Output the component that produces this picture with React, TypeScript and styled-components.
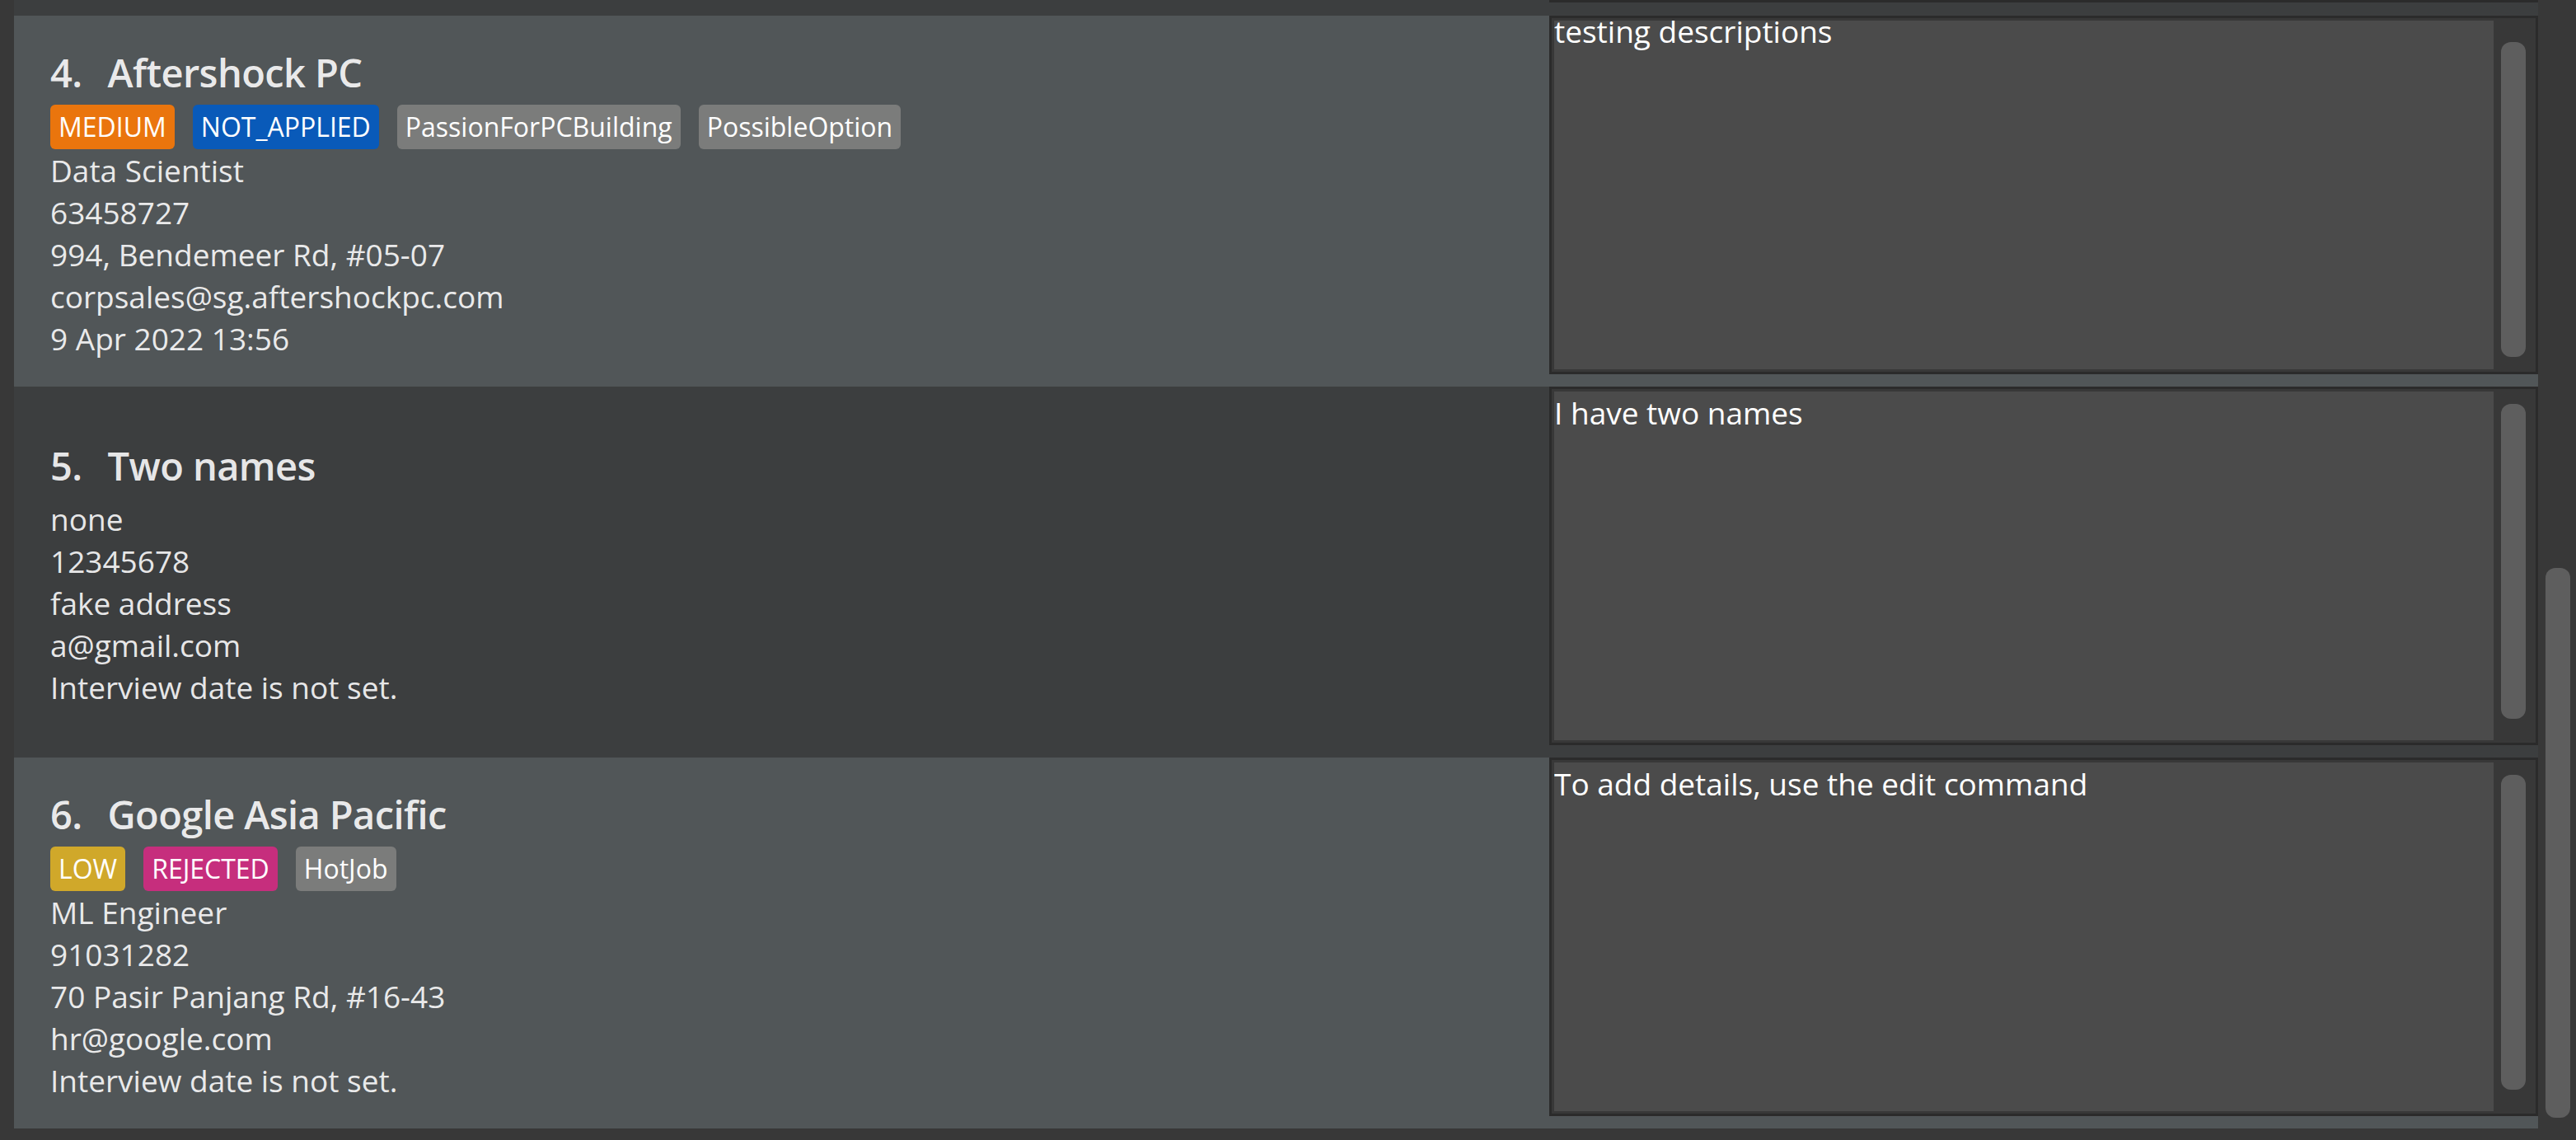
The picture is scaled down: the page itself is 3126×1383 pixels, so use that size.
import React from 'react';
import styled, { createGlobalStyle } from 'styled-components';

const GlobalStyle = createGlobalStyle`
  html, body {
    margin: 0;
    padding: 0;
    background: #383838;
  }
  body {
    font-family: "Open Sans", "Noto Sans", sans-serif;
    overflow: hidden;
  }
  * { box-sizing: border-box; }
`;

const Window = styled.div`
  display: flex;
  width: 3126px;
  height: 1383px;
  background: #383838;
  overflow: hidden;
`;

const ListViewport = styled.div`
  flex: 1;
  min-width: 0;
  padding-left: 17px;
  display: flex;
  flex-direction: column;
  overflow: hidden;
`;

const CellTail = styled.div`
  flex-shrink: 0;
  height: 19px;
  background: #3c3e3f;
  display: flex;
  justify-content: flex-end;
`;

const PanelTail = styled.div`
  width: 1200px;
  height: 3px;
  background: #2b2b2b;
`;

const Cell = styled.div<{ $odd: boolean }>`
  flex-shrink: 0;
  height: 450px;
  display: flex;
  align-items: flex-start;
  background: ${(p) => (p.$odd ? '#515658' : '#3c3e3f')};
`;

const Info = styled.div`
  flex: 1;
  align-self: stretch;
  display: flex;
  flex-direction: column;
  justify-content: center;
  padding: 0 0 3px 44px;
  color: rgba(255, 255, 255, 0.9);
`;

const Title = styled.div`
  display: flex;
  gap: 31px;
  font-size: 47px;
  font-weight: 600;
  line-height: 78px;
  letter-spacing: -0.6px;
  white-space: nowrap;
`;

const TagRow = styled.div`
  display: flex;
  gap: 22px;
  height: 54px;
`;

const Tag = styled.span<{ $bg: string }>`
  display: inline-flex;
  align-items: center;
  height: 54px;
  padding: 0 10px;
  border-radius: 6px;
  background: ${(p) => p.$bg};
  color: #ffffff;
  font-size: 32px;
  line-height: 1;
  white-space: nowrap;
`;

const Detail = styled.div`
  font-size: 37px;
  line-height: 51px;
  white-space: nowrap;
`;

const DescPanel = styled.div`
  flex-shrink: 0;
  width: 1200px;
  height: 435px;
  display: flex;
  border: 3px solid #2b2b2b;
  background: #383838;
`;

const DescArea = styled.div`
  flex: 1;
  margin: 3px 0 3px 3px;
  background: #4b4b4b;
  overflow: hidden;
`;

const DescText = styled.div<{ $scroll: number }>`
  margin-top: ${(p) => -p.$scroll}px;
  font-size: 37px;
  line-height: normal;
  color: #ffffff;
  white-space: pre-wrap;
`;

const ScrollTrack = styled.div<{ $width: number; $inset: number }>`
  flex-shrink: 0;
  width: ${(p) => p.$width}px;
  padding-left: ${(p) => p.$inset}px;
`;

const ScrollThumb = styled.div<{ $top: number; $height: number }>`
  width: 30px;
  margin-top: ${(p) => p.$top}px;
  height: ${(p) => p.$height}px;
  border-radius: 12px;
  background: #5e5e5e;
`;

type TagData = { label: string; color: string };
type Card = {
  id: number;
  name: string;
  tags: TagData[];
  details: string[];
  description: string;
  scroll: number;
  thumbShift: number;
};

const ORANGE = '#ea750d';
const BLUE = '#095ab9';
const GRAY = '#7b7c7b';
const GOLD = '#d0a82a';
const PINK = '#c62e7d';

const cards: Card[] = [
  {
    id: 4,
    name: 'Aftershock PC',
    tags: [
      { label: 'MEDIUM', color: ORANGE },
      { label: 'NOT_APPLIED', color: BLUE },
      { label: 'PassionForPCBuilding', color: GRAY },
      { label: 'PossibleOption', color: GRAY },
    ],
    details: [
      'Data Scientist',
      '63458727',
      '994, Bendemeer Rd, #05-07',
      'corpsales@sg.aftershockpc.com',
      '9 Apr 2022 13:56',
    ],
    description: 'testing descriptions',
    scroll: 13,
    thumbShift: 11,
  },
  {
    id: 5,
    name: 'Two names',
    tags: [],
    details: ['none', '12345678', 'fake address', 'a@gmail.com', 'Interview date is not set.'],
    description: 'I have two names',
    scroll: 0,
    thumbShift: 0,
  },
  {
    id: 6,
    name: 'Google Asia Pacific',
    tags: [
      { label: 'LOW', color: GOLD },
      { label: 'REJECTED', color: PINK },
      { label: 'HotJob', color: GRAY },
    ],
    details: [
      'ML Engineer',
      '91031282',
      '70 Pasir Panjang Rd, #16-43',
      'hr@google.com',
      'Interview date is not set.',
    ],
    description: 'To add details, use the edit command',
    scroll: 0,
    thumbShift: 0,
  },
];

function CompanyCard({ card, odd }: { card: Card; odd: boolean }) {
  return (
    <Cell $odd={odd}>
      <Info>
        <Title>
          <span>{card.id}.</span>
          <span>{card.name}</span>
        </Title>
        {card.tags.length > 0 && (
          <TagRow>
            {card.tags.map((t) => (
              <Tag key={t.label} $bg={t.color}>
                {t.label}
              </Tag>
            ))}
          </TagRow>
        )}
        {card.details.map((d, i) => (
          <Detail key={i}>{d}</Detail>
        ))}
      </Info>
      <DescPanel>
        <DescArea>
          <DescText $scroll={card.scroll}>{card.description}</DescText>
        </DescArea>
        <ScrollTrack $width={51} $inset={9}>
          <ScrollThumb $top={18 + card.thumbShift} $height={382} />
        </ScrollTrack>
      </DescPanel>
    </Cell>
  );
}

export default function App() {
  return (
    <>
      <GlobalStyle />
      <Window>
        <ListViewport>
          <CellTail>
            <PanelTail />
          </CellTail>
          {cards.map((c, i) => (
            <CompanyCard key={c.id} card={c} odd={i % 2 === 0} />
          ))}
        </ListViewport>
        <ScrollTrack $width={46} $inset={9}>
          <ScrollThumb $top={689} $height={667} />
        </ScrollTrack>
      </Window>
    </>
  );
}
